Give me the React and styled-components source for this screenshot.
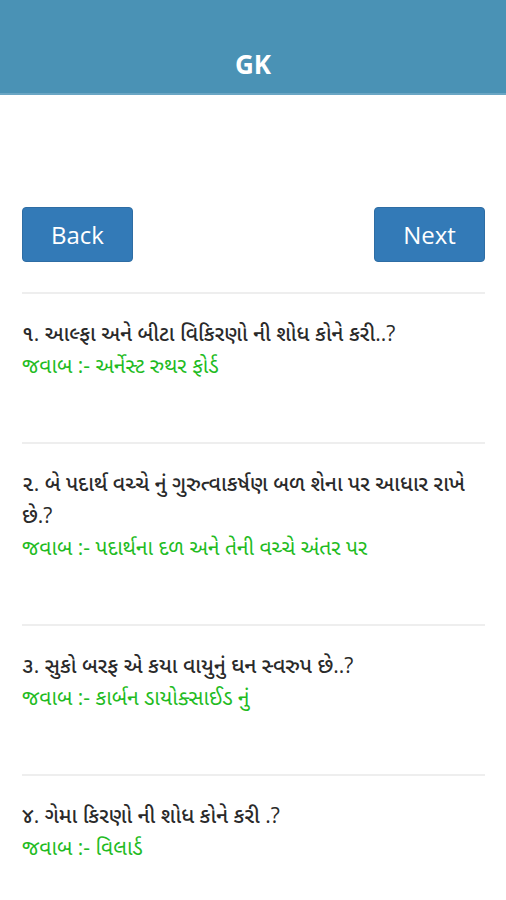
import React from "react";
import styled, { createGlobalStyle } from "styled-components";

const GlobalStyle = createGlobalStyle`
  body {
    margin: 0;
    background: #fff;
    font-family: "Open Sans", "Noto Sans", "Noto Sans Gujarati", sans-serif;
  }
`;

const questions = [
  {
    q: "૧. આલ્ફા અને બીટા વિકિરણો ની શોધ કોને કરી..?",
    a: "જવાબ :- અર્નેસ્ટ રુથર ફોર્ડ",
  },
  {
    q: "૨. બે પદાર્થ વચ્ચે નું ગુરુત્વાકર્ષણ બળ શેના પર આધાર રાખે છે.?",
    a: "જવાબ :- પદાર્થના દળ અને તેની વચ્ચે અંતર પર",
  },
  {
    q: "૩. સુકો બરફ એ કયા વાયુનું ઘન સ્વરુપ છે..?",
    a: "જવાબ :- કાર્બન ડાયોક્સાઈડ નું",
  },
  {
    q: "૪. ગેમા કિરણો ની શોધ કોને કરી .?",
    a: "જવાબ :- વિલાર્ડ",
  },
];

const App = () => {
  return (
    <Page>
      <GlobalStyle />
      <Header>
        <Title>GK</Title>
      </Header>
      <Content>
        <ButtonRow>
          <NavButton>Back</NavButton>
          <NavButton>Next</NavButton>
        </ButtonRow>
        <List>
          {questions.map((item, i) => (
            <Item key={i}>
              <Question>{item.q}</Question>
              <Answer>{item.a}</Answer>
            </Item>
          ))}
        </List>
      </Content>
    </Page>
  );
};

export default App;

const Page = styled.div`
  width: 506px;
  height: 900px;
  overflow: hidden;
  background: #fff;
`;

const Header = styled.div`
  height: 95px;
  background: #4a92b5;
  border-bottom: 2px solid #6aa6c4;
  display: flex;
  align-items: flex-end;
  justify-content: center;
  padding-bottom: 12px;
  box-sizing: border-box;
`;

const Title = styled.h1`
  margin: 0;
  color: #fff;
  font-family: "Open Sans", sans-serif;
  font-weight: 700;
  font-size: 26px;
  line-height: 34px;
`;

const Content = styled.div`
  padding: 112px 21px 0 22px;
`;

const ButtonRow = styled.div`
  display: flex;
  justify-content: space-between;
  margin-bottom: 30px;
`;

const NavButton = styled.button`
  width: 111px;
  height: 55px;
  background: #337ab7;
  border: 1px solid #2e6da4;
  border-radius: 4px;
  color: #fff;
  font-family: "Open Sans", sans-serif;
  font-size: 24px;
  padding: 0;
`;

const List = styled.div`
  display: flex;
  flex-direction: column;
`;

const Item = styled.div`
  border-top: 2px solid #eeeeee;
  padding: 23px 0 61px;
`;

const Question = styled.div`
  color: #2a2a2a;
  font-size: 21px;
  line-height: 32px;
  font-weight: 500;
`;

const Answer = styled.div`
  color: #22bb22;
  font-size: 21px;
  line-height: 32px;
`;
